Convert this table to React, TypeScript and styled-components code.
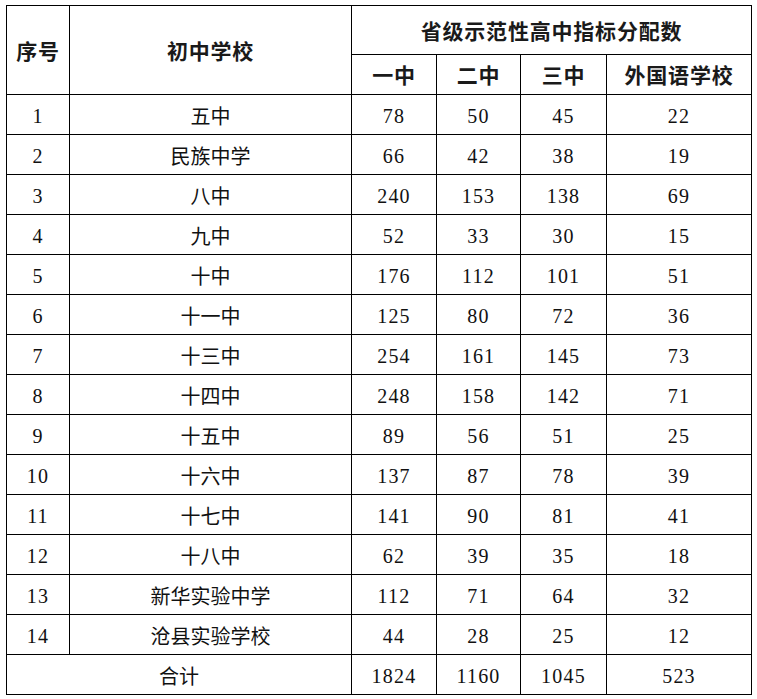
import React from 'react';
import styled, {createGlobalStyle} from 'styled-components';

const GlobalStyle = createGlobalStyle`
    html, body {
        margin: 0;
        padding: 0;
        background: #fff;
    }
`;

interface Row {
    no: string;
    school: string;
    counts: number[];
}

const rows: Row[] = [
    {no: '1', school: '五中', counts: [78, 50, 45, 22]},
    {no: '2', school: '民族中学', counts: [66, 42, 38, 19]},
    {no: '3', school: '八中', counts: [240, 153, 138, 69]},
    {no: '4', school: '九中', counts: [52, 33, 30, 15]},
    {no: '5', school: '十中', counts: [176, 112, 101, 51]},
    {no: '6', school: '十一中', counts: [125, 80, 72, 36]},
    {no: '7', school: '十三中', counts: [254, 161, 145, 73]},
    {no: '8', school: '十四中', counts: [248, 158, 142, 71]},
    {no: '9', school: '十五中', counts: [89, 56, 51, 25]},
    {no: '10', school: '十六中', counts: [137, 87, 78, 39]},
    {no: '11', school: '十七中', counts: [141, 90, 81, 41]},
    {no: '12', school: '十八中', counts: [62, 39, 35, 18]},
    {no: '13', school: '新华实验中学', counts: [112, 71, 64, 32]},
    {no: '14', school: '沧县实验学校', counts: [44, 28, 25, 12]},
];

const totals = [1824, 1160, 1045, 523];
const targets = ['一中', '二中', '三中', '外国语学校'];
const colWidths = [63, 282, 85, 84, 86, 145];

const App = () => {
    return (
        <>
            <GlobalStyle/>
            <Page>
                <Table>
                    <colgroup>
                        {colWidths.map((w, i) => (
                            <col key={i} style={{width: w}}/>
                        ))}
                    </colgroup>
                    <thead>
                        <HeadRow $top>
                            <HeadCell rowSpan={2}>序号</HeadCell>
                            <HeadCell rowSpan={2}>初中学校</HeadCell>
                            <HeadCell colSpan={4}>省级示范性高中指标分配数</HeadCell>
                        </HeadRow>
                        <HeadRow>
                            {targets.map((t) => (
                                <HeadCell key={t}>{t}</HeadCell>
                            ))}
                        </HeadRow>
                    </thead>
                    <tbody>
                        {rows.map((r) => (
                            <BodyRow key={r.no}>
                                <NumCell>{r.no}</NumCell>
                                <TextCell>{r.school}</TextCell>
                                {r.counts.map((c, i) => (
                                    <NumCell key={i}>{c}</NumCell>
                                ))}
                            </BodyRow>
                        ))}
                        <BodyRow>
                            <TextCell colSpan={2}>合计</TextCell>
                            {totals.map((c, i) => (
                                <NumCell key={i}>{c}</NumCell>
                            ))}
                        </BodyRow>
                    </tbody>
                </Table>
            </Page>
        </>
    );
};

const Page = styled.div`
    padding: 5px 0 0 6px;
`;

const Table = styled.table`
    border-collapse: collapse;
    table-layout: fixed;
    width: 745px;
    color: #111;
`;

const HeadRow = styled.tr<{ $top?: boolean }>`
    height: ${(p) => (p.$top ? '49px' : '40px')};
`;

const BodyRow = styled.tr`
    height: 40px;
`;

const Cell = styled.td`
    border: 1px solid #000;
    padding: 0;
    text-align: center;
    vertical-align: middle;
    line-height: 1;
`;

const HeadCell = styled(Cell).attrs({as: 'th'})`
    font-family: "Noto Sans CJK SC", sans-serif;
    font-weight: 700;
    font-size: 21px;
    letter-spacing: 0.8px;
    color: #1a1a1a;
`;

const TextCell = styled(Cell)`
    font-family: "Noto Sans CJK SC", sans-serif;
    font-size: 20px;
    padding-top: 2px;
`;

const NumCell = styled(Cell)`
    font-family: "Liberation Serif", "Noto Sans CJK SC", serif;
    font-size: 20px;
    letter-spacing: 1.2px;
    padding-top: 2px;
`;

export default App;
